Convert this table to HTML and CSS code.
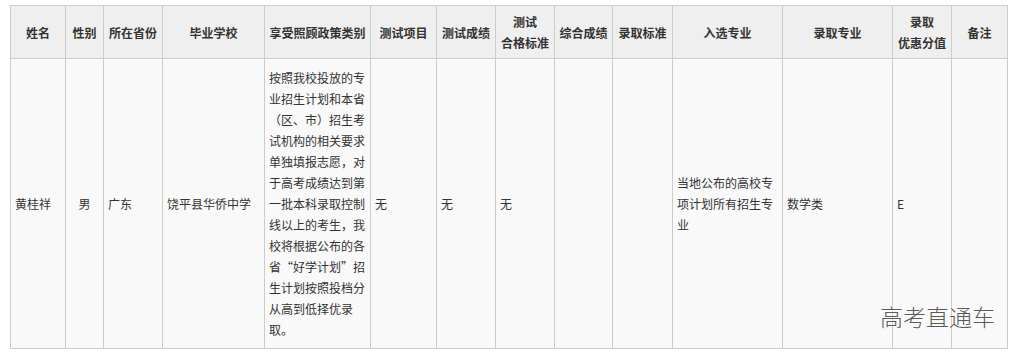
FILE: index.html
```html
<!DOCTYPE html>
<html lang="zh-CN">
<head>
<meta charset="utf-8">
<title>录取名单</title>
<link rel="stylesheet" href="styles.css">
</head>
<body>
<div class="page">
  <table class="grid">
    <colgroup>
      <col class="w55"><col class="w38"><col class="w59"><col class="w102"><col class="w106">
      <col class="w66"><col class="w59"><col class="w59"><col class="w58"><col class="w60">
      <col class="w110"><col class="w110"><col class="w59"><col class="w56">
    </colgroup>
    <thead>
      <tr>
        <th>姓名</th>
        <th>性别</th>
        <th>所在省份</th>
        <th>毕业学校</th>
        <th>享受照顾政策类别</th>
        <th>测试项目</th>
        <th>测试成绩</th>
        <th>测试<br>合格标准</th>
        <th>综合成绩</th>
        <th>录取标准</th>
        <th>入选专业</th>
        <th>录取专业</th>
        <th>录取<br>优惠分值</th>
        <th>备注</th>
      </tr>
    </thead>
    <tbody>
      <tr>
        <td>黄桂祥</td>
        <td class="center">男</td>
        <td>广东</td>
        <td>饶平县华侨中学</td>
        <td>按照我校投放的专业招生计划和本省（区、市）招生考试机构的相关要求单独填报志愿，对于高考成绩达到第一批本科录取控制线以上的考生，我校将根据公布的各省“好学计划”招生计划按照投档分从高到低择优录取。</td>
        <td>无</td>
        <td>无</td>
        <td>无</td>
        <td></td>
        <td></td>
        <td>当地公布的高校专项计划所有招生专业</td>
        <td>数学类</td>
        <td>E</td>
        <td></td>
      </tr>
    </tbody>
  </table>
  <div class="watermark">高考直通车</div>
</div>
</body>
</html>
```

FILE: styles.css
```css
html, body {
  margin: 0;
  padding: 0;
  background: #ffffff;
}

.page {
  position: relative;
  width: 1028px;
  height: 358px;
  padding: 5px 0 0 10px;
  box-sizing: border-box;
  font-family: "Microsoft YaHei", "Noto Sans CJK SC", sans-serif;
  font-size: 12px;
  color: #333333;
}

.grid {
  border-collapse: collapse;
  table-layout: fixed;
  width: 998px;
}

.w55 { width: 55px; }
.w38 { width: 38px; }
.w59 { width: 59px; }
.w102 { width: 102px; }
.w106 { width: 106px; }
.w66 { width: 66px; }
.w58 { width: 58px; }
.w60 { width: 60px; }
.w110 { width: 110px; }
.w56 { width: 56px; }

.grid th,
.grid td {
  border: 1px solid #cccccc;
  line-height: 21px;
  vertical-align: middle;
  word-break: break-all;
}

.grid th {
  background: #efefef;
  font-weight: bold;
  text-align: center;
  padding: 5px 0;
  height: 42px;
  color: #333333;
}

.grid td {
  background: #f9f9f9;
  text-align: left;
  padding: 8px 4px;
}

.grid td.center {
  text-align: center;
}

.watermark {
  position: absolute;
  left: 880px;
  top: 300px;
  font-size: 23px;
  line-height: 32px;
  font-weight: 300;
  color: #5a5a5a;
  letter-spacing: 0;
  text-shadow: 0 0 2px #ffffff, 0 0 1px #ffffff;
}
```
